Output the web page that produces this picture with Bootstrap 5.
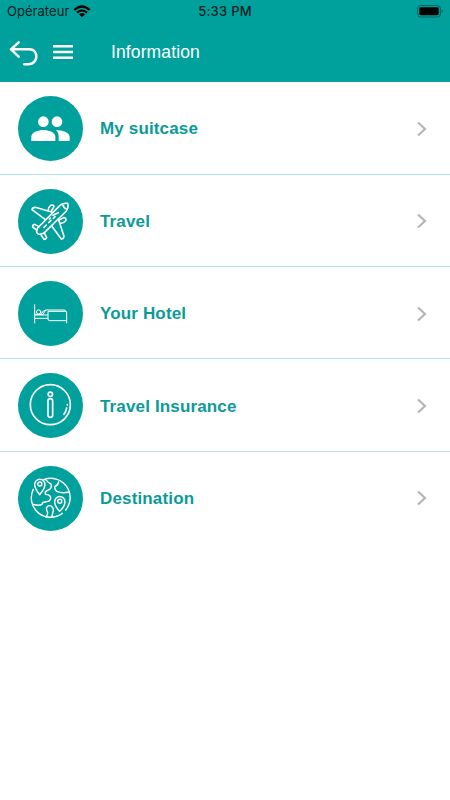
<!DOCTYPE html>
<html lang="en">
<head>
<meta charset="utf-8">
<meta name="viewport" content="width=device-width, initial-scale=1">
<title>Information</title>
<link href="https://cdn.jsdelivr.net/npm/bootstrap@5.3.0/dist/css/bootstrap.min.css" rel="stylesheet">
<style>
  :root { --teal: #00a19c; }
  body { font-family: "Liberation Sans", Arial, sans-serif; overflow: hidden; }
  .top { background: var(--teal); height: 82.3px; }
  .status { height: 22px; font: 13px/22px Inter, sans-serif; color: #07201f; padding: 0 7px 0 7px; }
  .status > * { flex: 1 1 0; }
  .carrier { letter-spacing: .04px; }
  .clock { font-weight: 500; letter-spacing: .25px; }
  .bar { height: 60px; padding-left: 9px; }
  .bar h1 { font-size: 17.5px; font-weight: 400; letter-spacing: .12px; margin-left: 38px; line-height: 60px; }
  .item { height: 92.4px; padding: 1.5px 22px 0 17.5px; border: 0; border-bottom: 1.4px solid #b5e2e2; color: #0b9b96; }
  .item:last-child { border-bottom-color: transparent; }
  .item-label { font-size: 17px; font-weight: 700; letter-spacing: .15px; margin-left: 17.5px; padding-top: 1px; }
  .disc { width: 65px; height: 65px; background: var(--teal); }
  svg { display: block; flex: none; }
  .line { fill: none; stroke: #fff; stroke-linecap: round; stroke-linejoin: round; }
</style>
</head>
<body class="bg-white">
<header class="top">
  <div class="status d-flex align-items-center">
    <div class="d-flex align-items-center">
      <span class="carrier">Opérateur</span>
      <svg class="ms-1" width="18" height="13" viewBox="0 0 54 39" fill="none" stroke="#000" stroke-width="6.5">
        <path d="M4 15Q27-6 50 15M12 23Q27 9 42 23"/><path d="M18 28Q27 20 36 28L27 37Z" fill="#000" stroke="none"/>
      </svg>
    </div>
    <div class="clock text-center">5:33 PM</div>
    <div class="d-flex justify-content-end">
      <svg width="26" height="13" viewBox="0 0 78 39">
        <rect x="2" y="2" width="68" height="34" rx="8" fill="none" stroke="#04625f" stroke-width="3"/>
        <rect x="7" y="7" width="58" height="24" rx="4"/>
        <path d="M74 14Q78 15 78 19T74 24Z" fill="#04625f"/>
      </svg>
    </div>
  </div>
  <div class="bar d-flex align-items-center text-white">
    <svg class="mt-1" width="29" height="26" viewBox="26 121 87 78">
      <path class="line" stroke-width="7.5" stroke-linecap="butt" d="M55 125L32 146L55 168M32 146H87C103 146 108 158 108 168C108 180 98 191 84 191H72"/>
    </svg>
    <svg width="20" height="16" viewBox="0 0 20 16" style="margin-left:15px">
      <path d="M0 2.3H20M0 8H20M0 13.7H20" stroke="#fff" stroke-width="2.4"/>
    </svg>
    <h1 class="mb-0">Information</h1>
  </div>
</header>

<main class="list-group list-group-flush">
  <a href="#" class="item d-flex align-items-center text-decoration-none">
    <span class="disc rounded-circle">
      <svg width="65" height="65" viewBox="23 23 195 195" fill="#fff">
        <circle cx="99" cy="100" r="16"/>
        <circle cx="140" cy="100" r="16"/>
        <path d="M63 158V145C63 131 85 125 99 125S135 131 135 145V158Z"/>
        <path d="M137 125C155 126 178 132 178 145V158H145V145C145 136 142 130 137 125Z"/>
      </svg>
    </span>
    <span class="item-label">My suitcase</span>
    <svg class="ms-auto" width="12" height="16" viewBox="0 0 12 16"><path d="M2 1.5L9 8L2 14.5" fill="none" stroke="#b5b5b5" stroke-width="2.2"/></svg>
  </a>
  <a href="#" class="item d-flex align-items-center text-decoration-none">
    <span class="disc rounded-circle">
      <svg width="65" height="65" viewBox="23 24 195 195">
        <g class="line" stroke-width="4.8">
          <path d="M79 150L82 141L149 73Q159 65 172 67Q176 79 168 90L100 157L90 160Q78 160 79 150Z"/>
          <path d="M126 94L75 79Q66 79 65 86L104 115M113 89Q113 79 121 73Q130 70 131 77L123 90"/>
          <path d="M144 114L161 166Q159 175 153 174L124 135M151 127Q162 126 167 118Q168 110 160 110L149 116"/>
          <path d="M86 137L73 130Q66 132 67 138L79 147M101 155L109 169Q107 176 101 175L91 160"/>
          <path d="M158 72Q160 82 169 84M101 139L108 132M115 125L122 118M129 112L134 107M128 103L144 95M117 114L120 111"/>
        </g>
      </svg>
    </span>
    <span class="item-label">Travel</span>
    <svg class="ms-auto" width="12" height="16" viewBox="0 0 12 16"><path d="M2 1.5L9 8L2 14.5" fill="none" stroke="#b5b5b5" stroke-width="2.2"/></svg>
  </a>
  <a href="#" class="item d-flex align-items-center text-decoration-none">
    <span class="disc rounded-circle">
      <svg width="65" height="65" viewBox="23 23 195 195">
        <g class="line" stroke-width="3">
          <path d="M73 94V149M74 125H112M74 135H112M169 149V119Q169 114 164 114H113V137Q113 142 118 142H169"/>
          <circle cx="85" cy="116" r="6.5"/>
          <path d="M76 123H98L106 110H161Q167 110 168 115M94 120Q97 111 106 110"/>
        </g>
      </svg>
    </span>
    <span class="item-label">Your Hotel</span>
    <svg class="ms-auto" width="12" height="16" viewBox="0 0 12 16"><path d="M2 1.5L9 8L2 14.5" fill="none" stroke="#b5b5b5" stroke-width="2.2"/></svg>
  </a>
  <a href="#" class="item d-flex align-items-center text-decoration-none">
    <span class="disc rounded-circle">
      <svg width="65" height="65" viewBox="23 24 195 195">
        <g class="line" stroke-width="5">
          <circle cx="120" cy="119" r="60"/>
          <circle cx="120" cy="88" r="6.5"/>
          <rect x="113" y="101" width="14" height="56" rx="7"/>
          <path d="M171 119V120M169 129Q167 139 161 148"/>
        </g>
      </svg>
    </span>
    <span class="item-label">Travel Insurance</span>
    <svg class="ms-auto" width="12" height="16" viewBox="0 0 12 16"><path d="M2 1.5L9 8L2 14.5" fill="none" stroke="#b5b5b5" stroke-width="2.2"/></svg>
  </a>
  <a href="#" class="item d-flex align-items-center text-decoration-none">
    <span class="disc rounded-circle">
      <svg width="65" height="65" viewBox="23 23 195 195">
        <g class="line" stroke-width="4.3">
          <path d="M100 64A58 58 0 0 1 166 155M156 165A58 58 0 0 1 69 93"/>
          <path d="M88 109Q73 91 73 78A15.500 15.500 0 0 1 104 78Q104 91 88 109Z"/><circle cx="88.500" cy="77" r="6"/>
          <path d="M148 159Q133 143 133 130A15.500 15.500 0 0 1 164 130Q164 143 148 159Z"/><circle cx="148.500" cy="129" r="6"/>
          <path d="M106 64Q114 74 122 77Q126 90 114 95Q102 99 105 108Q119 109 121 118Q121 128 109 130Q96 130 95 138Q86 143 69 138"/>
          <path d="M145 71Q143 81 134 84Q131 92 139 99Q151 105 174 102M107 176Q115 165 110 158Q105 146 115 142Q123 141 126 147Q131 153 128 160L125 174"/>
        </g>
      </svg>
    </span>
    <span class="item-label">Destination</span>
    <svg class="ms-auto" width="12" height="16" viewBox="0 0 12 16"><path d="M2 1.5L9 8L2 14.5" fill="none" stroke="#b5b5b5" stroke-width="2.2"/></svg>
  </a>
</main>
<script src="https://cdn.jsdelivr.net/npm/bootstrap@5.3.0/dist/js/bootstrap.bundle.min.js"></script>
</body>
</html>
